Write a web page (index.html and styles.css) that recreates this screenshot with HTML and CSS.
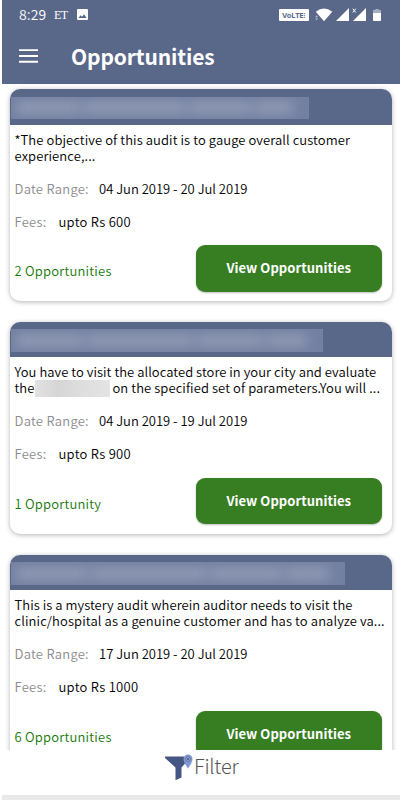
FILE: index.html
```
<!DOCTYPE html>
<html lang="en">
<head>
<meta charset="utf-8">
<title>Opportunities</title>
<link rel="stylesheet" href="styles.css">
</head>
<body>
<div class="app">
  <header class="top">
    <div class="status">
      <span class="clock">8:29</span>
      <span class="et">ET</span>
      <svg class="photo" width="11" height="11" viewBox="0 0 11 11"><rect width="11" height="11" rx="1" fill="#fff"/><path d="M1.5 9 3.6 6.2 5 7.8 7 5.2 9.6 9z" fill="#596789"/></svg>
      <span class="volte">VoLTE⁝</span>
      <svg class="wifi" width="18" height="14" viewBox="0 0 18 14"><path d="M.8 3.7Q9 -2.6 17.3 3.7L9 13.300z" fill="#fff"/><path d="M.2 9.2 1.6 7.3 3 9.2zM.2 10.4 1.6 12.3 3 10.4z" fill="#b9c1d3"/></svg>
      <svg class="sig" width="13" height="13" viewBox="0 0 13 13"><path d="M0 13 13 0V13z" fill="#fff"/></svg>
      <svg class="sigx" width="14" height="13" viewBox="0 0 14 13"><path d="M1 13 14 0V13z" fill="#fff"/><path d="M.8.7 3.8 4.5M3.8.7.8 4.5" stroke="#fff" stroke-width="1"/></svg>
      <svg class="batt" width="8" height="12" viewBox="0 0 8 12"><path d="M2.3 0h3.4v1H8v3H0V1h2.3z" fill="#a5adc1"/><path d="M0 4h8v7.2a.8.8 0 0 1-.8.8H.8a.8.8 0 0 1-.8-.8z" fill="#fff"/></svg>
    </div>
    <div class="bar">
      <svg class="menu" width="19" height="14" viewBox="0 0 19 14"><path d="M0 1.1h19M0 7h19M0 12.7h19" stroke="#fff" stroke-width="1.9"/></svg>
      <h1>Opportunities</h1>
    </div>
  </header>

  <main class="list">
    <article class="card">
      <div class="head"><div class="veil veil-a"><i></i><i></i><i></i><i></i></div></div>
      <div class="body">
        <div class="desc"><p class="mid">*The objective of this audit is to gauge overall customer</p><p class="wide">experience,...</p></div>
        <div class="row"><span class="label date">Date Range:</span><span class="val">04 Jun 2019 - 20 Jul 2019</span></div>
        <div class="row fees"><span class="label fee">Fees:</span><span class="val amount">upto Rs 600</span></div>
        <div class="foot"><span class="count">2 Opportunities</span><button>View Opportunities</button></div>
      </div>
    </article>
    <article class="card">
      <div class="head"><div class="veil veil-b"><i></i><i></i><i></i><i></i></div></div>
      <div class="body">
        <div class="desc"><p>You have to visit the allocated store in your city and evaluate</p><p class="masked"><span>the</span><span class="mask"></span><span class="mid">on the specified set of parameters.You will ...</span></p></div>
        <div class="row"><span class="label date">Date Range:</span><span class="val">04 Jun 2019 - 19 Jul 2019</span></div>
        <div class="row fees"><span class="label fee">Fees:</span><span class="val amount">upto Rs 900</span></div>
        <div class="foot"><span class="count">1 Opportunity</span><button>View Opportunities</button></div>
      </div>
    </article>
    <article class="card">
      <div class="head"><div class="veil veil-c"><i></i><i></i><i></i><i></i></div></div>
      <div class="body">
        <div class="desc"><p>This is a mystery audit wherein auditor needs to visit the</p><p class="wide">clinic/hospital as a genuine customer and has to analyze va...</p></div>
        <div class="row"><span class="label date">Date Range:</span><span class="val">17 Jun 2019 - 20 Jul 2019</span></div>
        <div class="row fees"><span class="label fee">Fees:</span><span class="val amount">upto Rs 1000</span></div>
        <div class="foot"><span class="count">6 Opportunities</span><button>View Opportunities</button></div>
      </div>
    </article>
  </main>

  <footer class="filter">
    <svg width="29" height="28" viewBox="0 0 29 28"><path d="M0 2.600H19L20.500 9 16.500 13.500V23.500L10.500 26.300V13.500L0 4z" fill="#465684"/><path d="M23 14.500Q18.500 8.500 18.500 5A4.500 4.500 0 0 1 27.500 5Q27.500 8.500 23 14.500z" fill="#7f99d2"/><circle cx="23" cy="5" r="2.300" fill="#a9b9df" stroke="#465684" stroke-width=".7"/><circle cx="23" cy="5" r=".9" fill="#34436f"/></svg>
    <span>Filter</span>
  </footer>
  <div class="strip"></div>
</div>
</body>
</html>
```
FILE: styles.css
```
* { box-sizing: border-box; }
body { margin: 0; background: #fff; font-family: "Noto Sans CJK JP", "Noto Sans", sans-serif; color: #000; }
.app { width: 403px; height: 800px; display: flex; flex-direction: column; overflow: hidden; }
.top { height: 83.5px; margin: 0 3.5px 0 2px; background: #596789; color: #fff; flex: none; }
.status { height: 30px; display: flex; align-items: center; padding-left: 17px; }
.clock { font-size: 14px; font-weight: 350; letter-spacing: .1px; width: 35px; line-height: 28px; margin-top: -2px; }
.et { font: 12px/28px "Liberation Serif", serif; width: 23px; letter-spacing: -.5px; margin-top: -1px; }
.photo { margin-top: -1px; }
.volte { margin-left: 191px; width: 29.5px; height: 12px; border-radius: 1px; background: #fff; color: #596789; font: bold 7.5px/12px "Noto Sans", sans-serif; text-align: center; letter-spacing: -.2px; white-space: nowrap; }
.wifi { margin-left: 6.5px; margin-top: -1px; }
.sig { margin-left: 3px; margin-top: -1px; }
.sigx { margin-left: 3px; margin-top: -1px; }
.batt { margin-left: 6.500px; margin-top: -1px; }
.bar { height: 53px; display: flex; align-items: center; padding-left: 17px; }
.menu { margin-top: -1px; }
h1 { margin: -2px 0 0 33px; font-size: 21px; line-height: 30px; font-weight: 700; letter-spacing: -.15px; }
.list { height: 666.5px; flex: none; overflow: hidden; padding: 5.5px 11px 0 9.5px; display: flex; flex-direction: column; gap: 21.3px; }
.card { height: 211.7px; flex: none; border-radius: 10px; background: #fff; box-shadow: 0 1px 5px rgba(0,0,0,.3); overflow: hidden; }
.head { height: 35.500px; background: #596789; padding: 7.500px 0 0 1.500px; }
.veil { height: 22.500px; background: #7480a1; overflow: hidden; display: flex; align-items: center; gap: 2px; padding: 0 16px 0 5px; }
.veil i { height: 11px; background: #939db7; filter: blur(6px); flex: 1; }
.veil i:nth-child(2) { flex: 1.6; }
.veil i:nth-child(4) { flex: .6; }
.veil-a { width: 298px; }
.veil-b { width: 312px; }
.veil-c { width: 334px; }
.body { padding: 7px 10px 0 5px; font-size: 13px; font-weight: 350; white-space: nowrap; }
.desc { height: 33px; letter-spacing: .04px; }
.desc p { margin: 0; height: 16px; line-height: 16px; }
.desc .mid { letter-spacing: .085px; }
.desc .wide { letter-spacing: .115px; }
.masked { display: flex; }
.mask { flex: none; width: 75px; height: 17px; margin: 0 2px 0 1px; background: linear-gradient(90deg, #e2e2e2, #d6d6d6 30%, #ddd 60%, #e4e4e4); }
.row { display: flex; height: 20px; line-height: 20px; margin-top: 14px; }
.fees { margin-top: 13px; }
.label { color: #8c8c8c; letter-spacing: .26px; }
.amount { letter-spacing: .27px; }
.date { width: 84.500px; }
.fee { width: 44px; }
.foot { display: flex; justify-content: space-between; align-items: flex-start; margin-top: 13.500px; }
.count { color: #167808; line-height: 20px; margin-top: 16px; letter-spacing: .22px; }
button { width: 186.500px; height: 46.500px; border: 0; border-radius: 9px; background: #377d22; color: #fff; font: 700 13px/46px "Noto Sans CJK JP", sans-serif; letter-spacing: .05px; padding: 0; box-shadow: 0 1px 2px rgba(0,0,0,.25); }
.filter { height: 45px; flex: none; display: flex; padding: 4px 0 0 165px; background: #fff; }
.filter span { font-size: 20px; font-weight: 300; line-height: 23px; letter-spacing: -.25px; color: #555; }
.strip { height: 5px; margin: 0 3.500px 0 2px; background: #e9e9e9; }
```
